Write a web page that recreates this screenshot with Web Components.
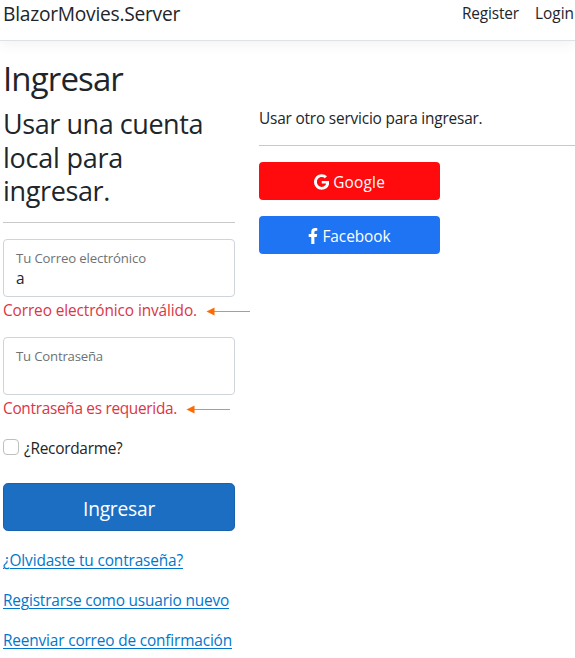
<!DOCTYPE html>
<html lang="es">
<head>
<meta charset="utf-8">
<title>Ingresar</title>
<style>
body{margin:0;background:#fff;color:#212529;font:15.4px/24px "Open Sans","Noto Sans",sans-serif;overflow:hidden}
</style>
</head>
<body>
<login-page></login-page>
<script>
const define = (name, html, setup) => customElements.define(name, class extends HTMLElement {
  connectedCallback() {
    if (this.shadowRoot) return;
    const root = this.attachShadow({mode: 'open'});
    const t = document.createElement('template');
    t.innerHTML = html;
    root.append(t.content.cloneNode(true));
    if (setup) setup(this, root);
  }
});

/* A line of text tracked so that it spans the width given in its "w" attribute. */
define('tracked-text', `<style>:host{display:inline-block;white-space:nowrap}</style><slot></slot>`, el => {
  const natural = el.getBoundingClientRect().width;
  const target = parseFloat(el.getAttribute('w'));
  el.style.letterSpacing = ((target - natural) / el.textContent.length).toFixed(3) + 'px';
});

define('site-header', `<style>
:host{display:flex;box-sizing:border-box;height:41px;padding:2px 1px 0 3px;border-bottom:1px solid #dee2e6;box-shadow:0 4px 12px rgba(0,0,0,.05);justify-content:space-between;align-items:flex-start}
.brand{font-size:19.2px}
nav{display:flex;gap:16px}
</style><div class="brand"><tracked-text w="177">BlazorMovies.Server</tracked-text></div>
<nav><tracked-text w="57">Register</tracked-text><tracked-text w="39">Login</tracked-text></nav>`);

define('rule-line', `<style>:host{display:block;height:1px;background:#c7c8c9}</style>`);

define('floating-field', `<style>
:host{display:block;box-sizing:border-box;height:58px;border:1px solid #ced4da;border-radius:4px;padding:8px 12px}
.label{font-size:13.2px;line-height:20px;color:#6e7275}
.value{line-height:22px;color:#212529}
</style><div class="label"><slot></slot></div><div class="value"><slot name="value"></slot></div>`);

define('field-error', `<style>
:host{display:flex;height:24px;color:#dc3545;margin-top:2px;align-items:center;gap:8.5px;white-space:nowrap}
svg{display:block;flex:none;margin-top:1px}
</style><slot></slot><svg width="44" height="9" viewBox="0 0 44 9"><path d="M8 4.5H44" stroke="#ff8534" stroke-width="1"/><path d="M0.5 4.5L8.5 0.5V8.5Z" fill="#ff6a00"/></svg>`);

define('check-option', `<style>
:host{display:flex;gap:5px;height:24px;align-items:flex-start}
.box{box-sizing:border-box;width:16px;height:16px;margin-top:4px;border:1px solid #bfbfbf;border-radius:4px;background:#fff}
.label{padding-top:2px}
</style><span class="box"></span><div class="label"><slot></slot></div>`);

define('submit-button', `<style>
:host{display:flex;box-sizing:border-box;height:48px;padding-top:4px;background:#1b6ec2;border:1px solid #1861ac;border-radius:4.8px;color:#fff;font-size:19.2px;align-items:center;justify-content:center}
</style><slot></slot>`);

define('service-button', `<style>
:host{display:flex;box-sizing:border-box;width:181px;height:38px;padding-top:4px;border-radius:4px;background:var(--fill);color:#fff;align-items:center;justify-content:center;gap:4px}
::slotted(svg){height:16px;display:block;fill:#fff;margin-top:-2px}
</style><slot></slot>`);

define('text-link', `<style>
:host{display:block;height:24px}
a{color:#0077cc}
::slotted(tracked-text){text-decoration:underline 1px;text-underline-offset:2px;text-decoration-skip-ink:auto}
</style><a><slot></slot></a>`);

define('login-page', `<style>
:host{display:block}
main{padding:18px 0 0 3px}
h1,h2{font-weight:400;margin:0}
h1{font-size:33px;line-height:40px}
h2{font-size:27px;line-height:33.5px;margin-bottom:14.5px}
h2 tracked-text{display:block;width:max-content}
.cols{display:grid;grid-template-columns:232px 1fr;gap:24px;margin-top:8px}
.local{display:flex;flex-direction:column}
floating-field{margin-top:16px}
.second{margin-top:14px}
check-option{margin-top:14px}
submit-button{margin-top:24px}
.links{display:grid;gap:16px;margin-top:18px}
.other{display:flex;flex-direction:column}
.other rule-line{margin:14px 0 16px}
.services{display:grid;gap:16px}
</style>
<site-header></site-header>
<main>
<h1><tracked-text w="120">Ingresar</tracked-text></h1>
<div class="cols">
<section class="local">
<h2><tracked-text w="200">Usar una cuenta</tracked-text><tracked-text w="120">local para</tracked-text><tracked-text w="107">ingresar.</tracked-text></h2>
<rule-line></rule-line>
<floating-field><tracked-text w="130">Tu Correo electrónico</tracked-text><span slot="value">a</span></floating-field>
<field-error><tracked-text w="194">Correo electrónico inválido.</tracked-text></field-error>
<floating-field class="second"><tracked-text w="87">Tu Contraseña</tracked-text></floating-field>
<field-error><tracked-text w="174">Contraseña es requerida.</tracked-text></field-error>
<check-option><tracked-text w="98.5">¿Recordarme?</tracked-text></check-option>
<submit-button><tracked-text w="72">Ingresar</tracked-text></submit-button>
<div class="links">
<text-link><tracked-text w="180">¿Olvidaste tu contraseña?</tracked-text></text-link>
<text-link><tracked-text w="226">Registrarse como usuario nuevo</tracked-text></text-link>
<text-link><tracked-text w="229">Reenviar correo de confirmación</tracked-text></text-link>
</div>
</section>
<section class="other">
<div><tracked-text w="223.5">Usar otro servicio para ingresar.</tracked-text></div>
<rule-line></rule-line>
<div class="services">
<service-button style="--fill:#ff0a0d"><svg viewBox="0 0 488 512" width="15.25"><path d="M488 261.8C488 403.3 391.1 504 248 504 110.8 504 0 393.2 0 256S110.8 8 248 8c66.8 0 123 24.5 166.3 64.9l-67.5 64.9C258.5 52.6 94.3 116.6 94.3 256c0 86.5 69.1 156.6 153.7 156.6 98.2 0 135-70.4 140.8-106.9H248v-85.3h236.1c2.3 12.7 3.9 24.9 3.9 41.4z"/></svg><tracked-text w="52">Google</tracked-text></service-button>
<service-button style="--fill:#1f74f4"><svg viewBox="0 0 320 512" width="10"><path d="M279.14 288l14.22-92.66h-88.91v-60.13c0-25.35 12.42-50.06 52.24-50.06h40.42V6.26S260.43 0 225.36 0c-73.22 0-121.08 44.38-121.08 124.72v70.62H22.89V288h81.39v224h100.17V288z"/></svg><tracked-text w="68">Facebook</tracked-text></service-button>
</div>
</section>
</div>
</main>`);
</script>
</body>
</html>
